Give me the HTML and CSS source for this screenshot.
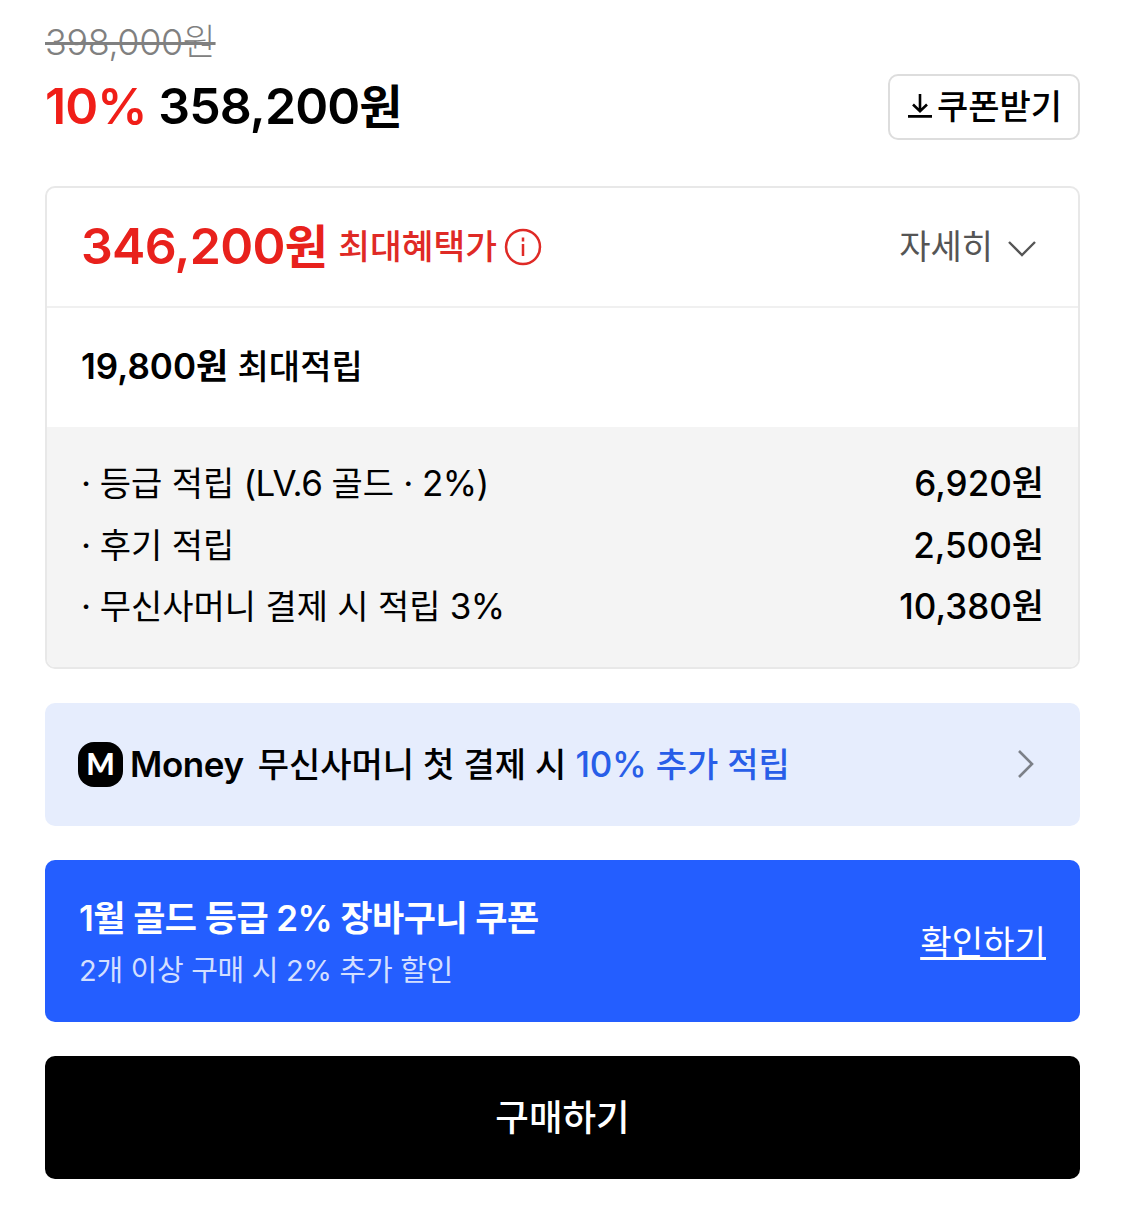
FILE: index.html
```html
<!DOCTYPE html>
<html lang="ko">
  <head>
    <meta charset="UTF-8" />
    <meta name="viewport" content="width=device-width, initial-scale=1.0" />
    <title>구매하기</title>
    <link rel="stylesheet" href="styles.css">
  </head>
  <body>
    <main class="product">
      <div class="original-price"><del>398,000원</del></div>
      <div class="price-row">
        <div class="price"><span class="rate">10%</span> <span class="amount">358,200<span class="won">원</span></span></div>
        <button class="coupon-button">
          <svg width="24" height="24" viewBox="0 0 24 24" fill="none" stroke="#000" stroke-width="2.6">
            <path d="M12 0v17M5 10.5l7 6.8 7-6.8M0 22.4h24" />
          </svg>
          <span class="coupon-text">쿠폰받기</span>
        </button>
      </div>

      <section class="benefit">
        <div class="benefit-head">
          <div class="best">
            <span class="best-price">346,200<span class="won">원</span></span>
            <span class="best-label">최대혜택가</span>
            <svg class="info" width="38" height="38" viewBox="0 0 38 38" fill="none" stroke="#df2a26" stroke-width="2.5">
              <circle cx="19" cy="19" r="17" />
              <path d="M19 16v12" />
              <path d="M19 9.5v4" />
            </svg>
          </div>
          <div class="detail">
            <span class="detail-text">자세히</span>
            <svg width="30" height="18" viewBox="0 0 30 18" fill="none" stroke="#555" stroke-width="2.4">
              <path d="M2 2l13 13L28 2" />
            </svg>
          </div>
        </div>
        <div class="saving"><span class="saving-price">19,800원</span> <span class="saving-text">최대적립</span></div>
        <ul class="saving-list">
          <li><span class="name">· <span class="ko">등급 적립</span> (LV.6 <span class="ko">골드</span> · 2%)</span><span class="value">6,920원</span></li>
          <li><span class="name">· <span class="ko">후기 적립</span></span><span class="value">2,500원</span></li>
          <li><span class="name">· <span class="ko">무신사머니 결제 시 적립</span> 3%</span><span class="value">10,380원</span></li>
        </ul>
      </section>

      <div class="money">
        <span class="money-logo">M</span>
        <span class="money-brand">Money</span>
        <span class="money-text">무신사머니 첫 결제 시</span>
        <span class="money-more">10% <span class="ko">추가 적립</span></span>
        <svg class="arrow" width="18" height="30" viewBox="0 0 18 30" fill="none" stroke="#7c8088" stroke-width="2.6">
          <path d="M2 2l13 13L2 28" />
        </svg>
      </div>

      <div class="cart-coupon">
        <div class="cart-info">
          <div class="cart-title">1월 골드 등급 2% 장바구니 쿠폰</div>
          <div class="cart-sub">2개 이상 구매 시 2% 추가 할인</div>
        </div>
        <a class="check" href="#">확인하기</a>
      </div>

      <button class="buy">구매하기</button>
    </main>
  </body>
</html>
```
FILE: styles.css
```css
body {
  margin: 0;
  background-color: #fff;
  color: #000;
  font-family: Inter, "Noto Sans CJK KR", sans-serif;
  font-size: 35px;
}

.product {
  padding: 20px 45px 30px;
}

button {
  font-family: inherit;
  cursor: pointer;
}

.original-price {
  height: 44px;
  line-height: 44px;
  font-size: 36px;
  font-weight: 300;
  letter-spacing: -0.4px;
  color: #808080;
}

.original-price del {
  text-decoration-thickness: 3px;
  text-decoration-skip-ink: none;
}

.price-row {
  display: flex;
  justify-content: space-between;
  height: 122px;
}

.price {
  height: 84px;
  line-height: 85px;
  font-size: 50px;
  font-weight: 600;
  letter-spacing: -0.9px;
}

.won {
  font-size: 47px;
}

.rate {
  color: #f01e18;
}

.coupon-button {
  display: flex;
  align-items: center;
  justify-content: center;
  gap: 5px;
  box-sizing: border-box;
  width: 192px;
  height: 66px;
  margin-top: 10px;
  padding: 0 0 2px 2px;
  background-color: #fff;
  border: 2px solid #ddd;
  border-radius: 10px;
  font-size: 34px;
  font-weight: 500;
  color: #000;
}

.coupon-text {
  padding-bottom: 4px;
}

.benefit {
  border: 2px solid #e8e8e8;
  border-radius: 10px;
  overflow: hidden;
}

.benefit-head {
  display: flex;
  align-items: center;
  justify-content: space-between;
  height: 118px;
  padding: 0 41px 0 34px;
  border-bottom: 2px solid #f0f0f0;
}

.best {
  display: flex;
  align-items: center;
  color: #e8211c;
}

.best-price {
  margin-right: 11px;
  padding-bottom: 7px;
  font-size: 50px;
  font-weight: 600;
  letter-spacing: -0.7px;
}

.best-label {
  margin-right: 7px;
  padding-bottom: 7px;
  font-size: 34.5px;
  font-weight: 500;
  color: #df2a26;
}

.info {
  margin-bottom: 1px;
}

.detail {
  display: flex;
  align-items: center;
  gap: 14px;
  font-size: 34px;
  color: #555;
}

.detail-text {
  padding-bottom: 6px;
}

.detail svg {
  margin-top: 3px;
}

.saving {
  height: 119px;
  line-height: 116px;
  padding-left: 34px;
  font-weight: 500;
}

.saving-price {
  font-weight: 600;
}

.saving-text {
  font-size: 34px;
}

.saving-list {
  margin: 0;
  padding: 26px 34px 29px;
  list-style: none;
  background-color: #f4f4f4;
}

.saving-list li {
  display: flex;
  justify-content: space-between;
  height: 61.5px;
  line-height: 61.5px;
}

.name {
  letter-spacing: -0.6px;
}

.ko {
  font-size: 34px;
  letter-spacing: -0.05px;
}

.value {
  font-weight: 500;
}

.money {
  display: flex;
  align-items: center;
  height: 123px;
  margin-top: 34px;
  padding: 0 45px 0 33px;
  background-color: #e6edfd;
  border-radius: 10px;
}

.money-logo {
  width: 45px;
  height: 45px;
  border-radius: 16px;
  background-color: #000;
  color: #fff;
  font-family: Lato, sans-serif;
  font-size: 30px;
  font-weight: 900;
  line-height: 43px;
  text-align: center;
}

.money-brand {
  margin-left: 7px;
  font-weight: 600;
  letter-spacing: -0.4px;
}

.money-text {
  margin-left: 14px;
  padding-bottom: 4px;
  font-size: 34px;
  font-weight: 500;
}

.money-more {
  margin-left: 9px;
  padding-bottom: 4px;
  color: #285ee8;
  font-weight: 500;
  letter-spacing: -0.2px;
}

.arrow {
  margin-left: auto;
}

.cart-coupon {
  display: flex;
  align-items: center;
  justify-content: space-between;
  height: 162px;
  margin-top: 34px;
  padding: 0 34px;
  background-color: #245eff;
  border-radius: 10px;
  color: #fff;
}

.cart-info {
  padding-top: 4px;
}

.cart-title {
  height: 54px;
  line-height: 54px;
  font-weight: 600;
  letter-spacing: -0.55px;
}

.cart-sub {
  height: 50px;
  line-height: 52px;
  font-size: 29px;
  letter-spacing: -0.3px;
  color: #d3dfff;
}

.check {
  padding-bottom: 2px;
  font-size: 34.2px;
  text-decoration-thickness: 3px;
  text-decoration-skip-ink: none;
  color: #fff;
}

.buy {
  display: block;
  width: 100%;
  height: 123px;
  margin-top: 34px;
  padding: 0 0 3px;
  border: 0;
  border-radius: 10px;
  background-color: #000;
  color: #fff;
  font-size: 36.5px;
  font-weight: 500;
}
```
